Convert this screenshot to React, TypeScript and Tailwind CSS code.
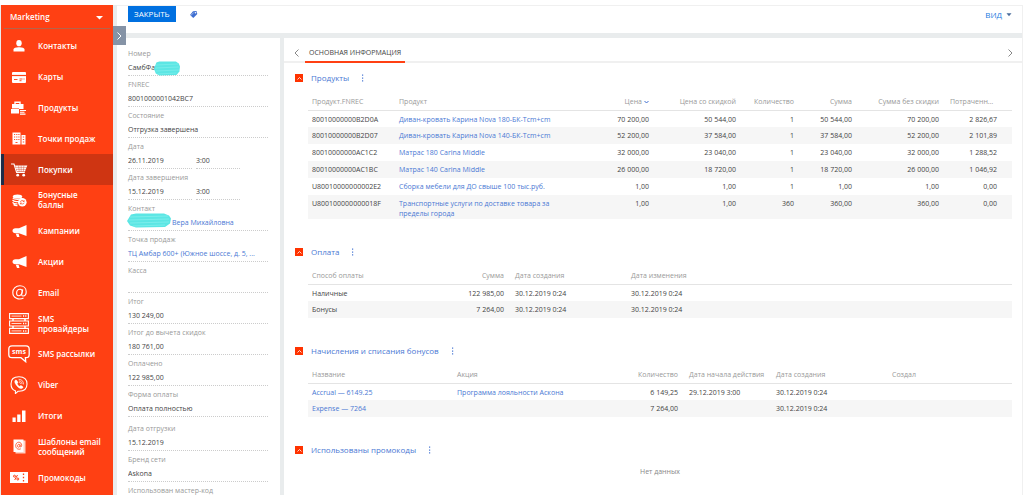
// src/App.tsx
import type { ReactNode } from "react";

const menu: { title: string; icon: ReactNode; active?: boolean }[] = [
  {
    title: "Контакты",
    icon: (
      <svg width="12" height="12" viewBox="0 0 12 12" fill="currentColor">
        <ellipse cx="6" cy="3.2" rx="2.7" ry="3.1" />
        <path d="M.5 11.500V9.400C.5 7.900 3.400 7.200 6 7.200s5.500.7 5.500 2.200v2.100z" />
      </svg>
    ),
  },
  {
    title: "Карты",
    icon: (
      <svg width="14" height="11" viewBox="0 0 14 11">
        <rect width="14" height="11" rx="1" fill="#fff" />
        <path d="M0 3.500h14" stroke="#ff4013" strokeWidth="1.200" />
        <path d="M2 7.500h3.500M7.500 7h3M7.500 8.700h2M11.500 7h1" stroke="#ff4013" strokeWidth=".9" />
      </svg>
    ),
  },
  {
    title: "Продукты",
    icon: (
      <svg width="16" height="14" viewBox="0 0 16 14">
        <path d="M4 3V1.200h5V3" fill="none" stroke="#fff" strokeWidth="1.400" />
        <path d="M1 3h11.500v5H8v4.500H0V8h1z" fill="#fff" />
        <path d="M0 7.500h8" stroke="#ff4013" strokeWidth=".6" />
        <path d="M9 9.500h6M9 11.300h4.500M9 13.100h5.500" stroke="#fff" strokeWidth="1.100" />
      </svg>
    ),
  },
  {
    title: "Точки продаж",
    icon: (
      <svg width="14" height="13" viewBox="0 0 14 13">
        <path d="M.5.5h8v12h-8zM9.500 3h4v9.500h-4z" fill="#fff" />
        <path d="M2 2.500h1.200M4.200 2.500h1.200M6.300 2.500h1.200M2 5h1.200M4.200 5h1.200M6.300 5h1.200M2 7.500h1.200M4.200 7.500h1.200M6.300 7.500h1.200M10.800 5h1.400M10.800 7.500h1.400M10.800 10h1.400M3.500 10.500h2" stroke="#ff4013" strokeWidth=".9" />
      </svg>
    ),
  },
  {
    title: "Покупки",
    active: true,
    icon: (
      <svg width="17" height="14" viewBox="0 0 17 14">
        <path d="M0 1h3l2.600 8.500h8.200" fill="none" stroke="#fff" strokeWidth="1.100" />
        <path d="M4 2.500h12.300L14 8.500H6z" fill="#fff" />
        <path d="M4.500 4.400h11.500M5 6.400h10M7.600 2.500l.6 6M10.200 2.500v6M12.900 2.500l-.6 6" stroke="#cf3512" strokeWidth=".4" />
        <circle cx="6.700" cy="12.200" r="1.400" fill="#fff" />
        <circle cx="12.700" cy="12.200" r="1.400" fill="#fff" />
      </svg>
    ),
  },
  {
    title: "Бонусные баллы",
    icon: (
      <svg width="15" height="13" viewBox="0 0 15 13">
        <ellipse cx="5.500" cy="2.500" rx="4.700" ry="2" fill="#fff" />
        <path d="M.8 3.800c1.500 2 7.800 2 9.300 0M.5 6c1.500 2 6 2 8 1M.5 8.300c1.200 1.500 3 1.800 5 1.600M1.500 10.500c1 1 2.500 1.300 4 1.200" fill="none" stroke="#fff" strokeWidth="1.300" />
        <circle cx="10.300" cy="8.300" r="4.300" fill="#fff" />
        <path d="M8.300 7.800c.6-1.400 2.600-1.600 3.600-.5M12.300 8.800c-.6 1.400-2.600 1.600-3.600.5M12.200 6.300v1.300h-1.300M8.400 10.300V9h1.300" fill="none" stroke="#ff4013" strokeWidth=".7" />
      </svg>
    ),
  },
  { title: "Кампании", icon: <Megaphone /> },
  { title: "Акции", icon: <Megaphone /> },
  {
    title: "Email",
    icon: (
      <svg width="15" height="15" viewBox="0 0 15 15" fill="none" stroke="#fff" strokeWidth="1.100">
        <path d="M11.500 13C7 15.500.8 13 .8 7.500.8 3.500 4 .8 7.800.8s6.400 2.500 6.400 6c0 2.600-1.500 4.200-3.100 4.200-1.500 0-1.600-1-1.300-2.200l1-4.500" />
        <path d="M10.200 6.500c0-1.300-.8-2.200-2.100-2.200-2 0-3.500 1.800-3.500 4 0 1.500.8 2.400 2 2.400 1.900 0 3.300-1.900 3.600-4.200z" />
      </svg>
    ),
  },
  {
    title: "SMS провайдеры",
    icon: (
      <svg width="20" height="21" viewBox="0 0 20 21" fill="none" stroke="#fff">
        <path d="M.6.6h18.800v5H.6zM.6 8h18.800v5H.6zM.6 15.400h18.800v5H.6z" strokeWidth="1.100" />
        <path d="M2.500 3.100h10M2.500 10.500h10M2.500 17.900h10" strokeWidth=".8" />
        <path d="M14 3.100h3.500M14 10.500h3.500M14 17.900h3.500" strokeWidth="1.500" strokeDasharray="1.200 1" />
        <path d="M4 5.600V8M16 5.600V8M4 13v2.400M16 13v2.400" strokeWidth="1.500" />
      </svg>
    ),
  },
  {
    title: "SMS рассылки",
    icon: (
      <svg width="22" height="18" viewBox="0 0 22 18">
        <path d="M4 .8h14c2 0 3.200 1.200 3.200 3.200v5.500c0 2-1.200 3.200-3.200 3.200h-.6l.3 4-4.700-4H4C2 12.700.8 11.500.8 9.500V4C.8 2 2 .8 4 .8z" fill="none" stroke="#fff" strokeWidth="1.300" />
        <text x="11" y="9.200" textAnchor="middle" fill="#fff" fontSize="7" fontWeight="700" fontFamily="Open Sans, sans-serif">sms</text>
      </svg>
    ),
  },
  {
    title: "Viber",
    icon: (
      <svg width="18" height="18" viewBox="0 0 18 18" fill="none" stroke="#fff" strokeLinecap="round">
        <path d="M9 .8c5.500 0 8 2.200 8 7.200s-2.500 7.300-8 7.300H8l-2.600 2.300V14.800C2.200 13.800 1 11.800 1 8 1 3 3.500.8 9 .8z" strokeWidth="1.100" />
        <path d="M5.300 4.200c-1.200 1-.8 2.600 1.200 5.200s4.200 3.700 5.400 3.200c1.300-.7 1.500-1.400.8-2l-1.500-1c-.8-.4-1.100.5-1.600.6-.9-.2-2-1.500-2.300-2.500.2-.6 1-.8.6-1.600L6.700 4.300c-.4-.5-.9-.5-1.400-.1z" fill="#fff" strokeWidth=".3" />
        <path d="M9 3.300c2.800.1 4.500 1.800 4.500 4.700M9.300 4.900c1.700.1 2.600 1.100 2.700 2.900M9.600 6.400c.6.1.9.500.9 1.100" strokeWidth=".7" />
      </svg>
    ),
  },
  {
    title: "Итоги",
    icon: (
      <svg width="14" height="12" viewBox="0 0 14 12" fill="currentColor">
        <path d="M.5 7.500h3.200V12H.5zM5.200 4.500h3.300V12H5.200zM10 .5h3.500V12H10z" />
      </svg>
    ),
  },
  {
    title: "Шаблоны email сообщений",
    icon: (
      <svg width="13" height="15" viewBox="0 0 13 15">
        <path d="M2.500 1.500h10v13h-10z" fill="#ffd0c2" />
        <path d="M.5.5h10v12.500h-10z" fill="#fff" />
        <path d="M7.800 9.800C5.500 11 2.700 9.500 2.700 6.700c0-2 1.400-3.500 3.100-3.500S8.700 4.600 8.700 6.400c0 2-2 2-1.700.5l.2-1.300M7 6.600c0 1.800-2.500 2.300-2.500.3S7 4.700 7 6.600z" fill="none" stroke="#ff4013" strokeWidth=".8" />
      </svg>
    ),
  },
  {
    title: "Промокоды",
    icon: (
      <svg width="18" height="11" viewBox="0 0 18 11">
        <path d="M0 0h18v11H0z" fill="#fff" />
        <path d="M7.500 3l-2.800 5" stroke="#ff4013" strokeWidth="1" />
        <path d="M13.500 1.500v8.500" stroke="#ff4013" strokeWidth="1.300" strokeDasharray="1.600 1.600" />
        <circle cx="4.500" cy="4.200" r="1" fill="none" stroke="#ff4013" />
        <circle cx="7.800" cy="7" r="1" fill="none" stroke="#ff4013" />
      </svg>
    ),
  },
];

const products = [
  ["80010000000B2D0A", "Диван-кровать Карина Nova 180-БК-Tcm+cm", "70 200,00", "50 544,00", "1", "50 544,00", "70 200,00", "2 826,67"],
  ["80010000000B2D07", "Диван-кровать Карина Nova 140-БК-Tcm+cm", "52 200,00", "37 584,00", "1", "37 584,00", "52 200,00", "2 101,89"],
  ["80010000000AC1C2", "Матрас 180 Carina Middle", "32 000,00", "23 040,00", "1", "23 040,00", "32 000,00", "1 288,52"],
  ["80010000000AC1BC", "Матрас 140 Carina Middle", "26 000,00", "18 720,00", "1", "18 720,00", "26 000,00", "1 046,92"],
  ["U80010000000002E2", "Сборка мебели для ДО свыше 100 тыс.руб.", "1,00", "1,00", "1", "1,00", "1,00", "0,00"],
  ["U800100000000018F", "Транспортные услуги по доставке товара за пределы города", "1,00", "1,00", "360", "360,00", "360,00", "0,00"],
];

function Megaphone() {
  return (
    <svg width="15" height="12" viewBox="0 0 15 12" fill="currentColor">
      <path d="M14.500 0v11L7 8.300H3.500C1.500 8.300.5 7.200.5 5.800S1.500 3.300 3.500 3.300H7z" />
      <path d="M3.800 8.800h2.800L7.500 12H5z" />
    </svg>
  );
}

function Scribble({ className }: { className: string }) {
  return (
    <svg className={className} viewBox="0 0 44 15" preserveAspectRatio="none" aria-hidden="true">
      <path d="M4 1.500L9 .5l28 0 5 2 2 3-1 5-5 3.500-29 .5L3 12.500 0 8z" fill="#5ce6e4" />
      <path d="M3 4l38-1M2 7l40-1M3 10l39-1M6 13l32-1" stroke="#83efec" strokeWidth=".8" />
    </svg>
  );
}

function Chevron({ right = false }: { right?: boolean }) {
  return (
    <svg width="5" height="8" viewBox="0 0 5 8" fill="none" stroke="currentColor">
      <path d={right ? "M.5.5L4 4 .5 7.500" : "M4.500.5L1 4l3.500 3.500"} />
    </svg>
  );
}

function Field({ id, label, value }: { id: string; label: string; value: string }) {
  return (
    <div className="h-[31px] shrink-0">
      <label htmlFor={id} className="block h-3 leading-3 text-[#999]">{label}</label>
      <input id={id} readOnly defaultValue={value} className="block h-4 w-full border-b border-dotted border-[#ccc] outline-none" />
    </div>
  );
}

function DateField({ id, label, date, time }: { id: string; label: string; date: string; time: string }) {
  return (
    <div className="h-[31px] shrink-0">
      <label htmlFor={id} className="block h-3 leading-3 text-[#999]">{label}</label>
      <div className="flex gap-1">
        <input id={id} readOnly defaultValue={date} className="h-4 w-16 border-b border-dotted border-[#ccc] outline-none" />
        <input aria-label={label} readOnly defaultValue={time} className="h-4 w-11 border-b border-dotted border-[#ccc] outline-none" />
      </div>
    </div>
  );
}

function Section({ title, children }: { title: string; children: ReactNode }) {
  return (
    <section className="mb-[25px]">
      <div className="flex h-4 items-center">
        <button aria-label="Свернуть" className="mr-2 flex h-2 w-2 items-center justify-center bg-[#ff3300] text-white">
          <svg width="5" height="3" viewBox="0 0 5 3" fill="none" stroke="currentColor">
            <path d="M.5 2.500l2-2 2 2" strokeWidth=".8" />
          </svg>
        </button>
        <h2 className="text-[8px] text-[#4a78d4]">{title}</h2>
        <button aria-label="Действия" className="ml-3 text-[#4a78d4]">
          <svg width="3" height="8" viewBox="0 0 3 8" fill="currentColor">
            <path d="M1 .5h1.200v1.300H1zM1 3.400h1.200v1.300H1zM1 6.300h1.200v1.300H1z" />
          </svg>
        </button>
      </div>
      <div className="mt-[9px] ml-[13px]">{children}</div>
    </section>
  );
}

const table = "w-full table-fixed text-left";
const th = "h-[15px] truncate border-b border-[#e4e4e4] pr-[7px] pl-1 align-top leading-[14px] font-normal text-[#999]";
const tr = "h-[17px] even:bg-[#f6f6f6]";
const td = "pt-1 pr-[7px] pl-1 align-top leading-[10px]";
const link = "text-[#4a78d4]";

export default function App() {
  return (
    <div className="flex h-screen flex-col bg-white pt-[5px] font-['Open_Sans',sans-serif] text-[7px] text-[#444]">
      <div className="flex min-h-0 flex-1 bg-[#e9eced]">
        <aside className="relative mr-1 ml-px flex w-28 shrink-0 flex-col bg-[#ff4013] pb-0.5 text-[8px] font-semibold text-white">
          <div className="relative mx-[3px] mb-[2px] h-6 border-b border-[#b5644b]">
            <select aria-label="Рабочее место" className="h-full w-full appearance-none bg-transparent pl-[6px] outline-none">
              <option>Marketing</option>
            </select>
            <svg className="pointer-events-none absolute top-[11px] right-[7px]" width="7" height="4" viewBox="0 0 7 4" fill="currentColor">
              <path d="M0 0h7L3.500 3.500z" />
            </svg>
          </div>
          <nav className="flex min-h-0 flex-1 flex-col">
            {menu.map((item) => (
              <a
                key={item.title}
                href="#"
                className={
                  item.active
                    ? "flex flex-1 items-center border-l-[3px] border-[#1c2c48] bg-[#cf3512] pr-2"
                    : "flex flex-1 items-center border-l-[3px] border-transparent pr-2"
                }
              >
                <span className="flex w-[30px] shrink-0 items-center justify-center">{item.icon}</span>
                <span className="ml-1 leading-[10px]">{item.title}</span>
              </a>
            ))}
          </nav>
          <button aria-label="Свернуть меню" className="absolute top-[21px] left-full z-10 flex h-[19px] w-[13px] items-center justify-center bg-[#8593a6] text-white">
            <Chevron right />
          </button>
        </aside>

        <div className="flex min-w-0 flex-1 flex-col border-t border-r border-[#f0f0f0]">
          <header className="mb-[5px] flex h-[27px] shrink-0 items-start bg-white pr-[10px] pl-[11px]">
            <button className="h-4 bg-[#0070e0] px-[6px] text-[8px] text-white">ЗАКРЫТЬ</button>
            <button aria-label="Теги" className="mt-1 ml-[13px] text-[#3f6fd1]">
              <svg width="9" height="9" viewBox="0 0 9 9" fill="currentColor">
                <path d="M4 1.300L7.500 1l.8 3-4 4L1 5z" />
                <path d="M4.800 2.500L1.500 5.800" stroke="#fff" strokeWidth=".5" />
                <circle cx="6.500" cy="2.700" r=".8" fill="#fff" />
              </svg>
            </button>
            <button className="ml-auto flex h-[18px] items-center gap-1 text-[8px] text-[#1a7be0]">
              ВИД
              <svg width="6" height="4" viewBox="0 0 6 4" fill="#4a6c9c">
                <path d="M.5.300h5L3 3.200z" />
              </svg>
            </button>
          </header>

          <div className="flex min-h-0 flex-1 gap-1">
            <form className="flex w-[163px] shrink-0 flex-col overflow-hidden bg-white pt-[10px] pr-3 pl-[11px]">
              <div className="relative">
                <Field id="number" label="Номер" value="СамбФа" />
                <Scribble className="absolute top-[13px] left-[26px] h-[15px] w-[26px]" />
              </div>
              <Field id="fnrec" label="FNREC" value="8001000001042BC7" />
              <Field id="state" label="Состояние" value="Отгрузка завершена" />
              <DateField id="date" label="Дата" date="26.11.2019" time="3:00" />
              <DateField id="date-end" label="Дата завершения" date="15.12.2019" time="3:00" />
              <div className="relative h-[31px] shrink-0">
                <p className="h-3 leading-3 text-[#999]">Контакт</p>
                <a href="#" className="block h-4 border-b border-dotted border-[#ccc] pl-11 leading-4 text-[#4a78d4]">Вера Михайловна</a>
                <Scribble className="absolute top-[10px] -left-px h-[15px] w-11" />
              </div>
              <div className="h-[31px] shrink-0">
                <p className="h-3 leading-3 text-[#999]">Точка продаж</p>
                <a href="#" className="block h-4 border-b border-dotted border-[#ccc] leading-4 text-[#4a78d4]">ТЦ Амбар 600+ (Южное шоссе, д. 5, ...</a>
              </div>
              <Field id="cashbox" label="Касса" value="" />
              <Field id="total" label="Итог" value="130 249,00" />
              <Field id="total-full" label="Итог до вычета скидок" value="180 761,00" />
              <Field id="paid" label="Оплачено" value="122 985,00" />
              <Field id="pay-form" label="Форма оплаты" value="Оплата полностью" />
              <div className="mt-[3px]">
                <Field id="ship-date" label="Дата отгрузки" value="15.12.2019" />
              </div>
              <Field id="brand" label="Бренд сети" value="Askona" />
              <Field id="master-code" label="Использован мастер-код" value="" />
            </form>

            <main className="min-w-0 flex-1 overflow-hidden bg-white">
              <div className="flex h-[25px] items-stretch border-b-2 border-[#f0f0f0] pr-[9px] pl-[10px] text-[#888]">
                <button aria-label="Назад" className="pt-[7px]"><Chevron /></button>
                <button className="-mb-0.5 ml-[6px] border-b-2 border-[#ff4013] px-1 pt-2 text-[#444]">ОСНОВНАЯ ИНФОРМАЦИЯ</button>
                <button aria-label="Вперёд" className="ml-auto pt-[7px]"><Chevron right /></button>
              </div>

              <div className="pt-[7px] pr-[10px] pl-[11px]">
                <Section title="Продукты">
                  <table className={table}>
                    <colgroup>
                      <col className="w-[87px]" />
                      <col />
                      <col className="w-[87px]" />
                      <col className="w-[87px]" />
                      <col className="w-[58px]" />
                      <col className="w-[58px]" />
                      <col className="w-[87px]" />
                      <col className="w-[58px]" />
                      <col className="w-2" />
                    </colgroup>
                    <thead>
                      <tr>
                        <th className={th}>Продукт.FNREC</th>
                        <th className={th}>Продукт</th>
                        <th className={`${th} text-right`}>
                          Цена
                          <svg className="ml-0.5 inline" width="5" height="4" viewBox="0 0 5 4" fill="none" stroke="#3f6fd1">
                            <path d="M.5 1l2 2 2-2" />
                          </svg>
                        </th>
                        <th className={`${th} text-right`}>Цена со скидкой</th>
                        <th className={`${th} text-right`}>Количество</th>
                        <th className={`${th} text-right`}>Сумма</th>
                        <th className={`${th} text-right`}>Сумма без скидки</th>
                        <th className={th}>Потраченны...</th>
                        <th className={th}></th>
                      </tr>
                    </thead>
                    <tbody>
                      {products.map(([fnrec, name, ...numbers]) => (
                        <tr key={fnrec} className={tr}>
                          <td className={td}>{fnrec}</td>
                          <td className={td}>
                            <a href="#" className="block max-w-[166px] text-[#4a78d4]">{name}</a>
                          </td>
                          {numbers.map((n, i) => (
                            <td key={i} className={`${td} text-right`}>{n}</td>
                          ))}
                          <td></td>
                        </tr>
                      ))}
                    </tbody>
                  </table>
                </Section>

                <Section title="Оплата">
                  <table className={table}>
                    <colgroup>
                      <col className="w-[116px]" />
                      <col className="w-[87px]" />
                      <col className="w-[116px]" />
                      <col />
                    </colgroup>
                    <thead>
                      <tr>
                        <th className={th}>Способ оплаты</th>
                        <th className={`${th} text-right`}>Сумма</th>
                        <th className={th}>Дата создания</th>
                        <th className={th}>Дата изменения</th>
                      </tr>
                    </thead>
                    <tbody>
                      <tr className={tr}>
                        <td className={td}>Наличные</td>
                        <td className={`${td} text-right`}>122 985,00</td>
                        <td className={td}>30.12.2019 0:24</td>
                        <td className={td}>30.12.2019 0:24</td>
                      </tr>
                      <tr className={tr}>
                        <td className={td}>Бонусы</td>
                        <td className={`${td} text-right`}>7 264,00</td>
                        <td className={td}>30.12.2019 0:24</td>
                        <td className={td}>30.12.2019 0:24</td>
                      </tr>
                    </tbody>
                  </table>
                </Section>

                <Section title="Начисления и списания бонусов">
                  <table className={table}>
                    <colgroup>
                      <col className="w-[145px]" />
                      <col className="w-[145px]" />
                      <col className="w-[87px]" />
                      <col className="w-[87px]" />
                      <col className="w-[116px]" />
                      <col />
                    </colgroup>
                    <thead>
                      <tr>
                        <th className={th}>Название</th>
                        <th className={th}>Акция</th>
                        <th className={`${th} text-right`}>Количество</th>
                        <th className={th}>Дата начала действия</th>
                        <th className={th}>Дата создания</th>
                        <th className={th}>Создал</th>
                      </tr>
                    </thead>
                    <tbody>
                      <tr className={tr}>
                        <td className={td}><a href="#" className={link}>Accrual — 6149.25</a></td>
                        <td className={td}><a href="#" className={link}>Программа лояльности Аскона</a></td>
                        <td className={`${td} text-right`}>6 149,25</td>
                        <td className={td}>29.12.2019 3:00</td>
                        <td className={td}>30.12.2019 0:24</td>
                        <td className={td}></td>
                      </tr>
                      <tr className={tr}>
                        <td className={td}><a href="#" className={link}>Expense — 7264</a></td>
                        <td className={td}></td>
                        <td className={`${td} text-right`}>7 264,00</td>
                        <td className={td}></td>
                        <td className={td}>30.12.2019 0:24</td>
                        <td className={td}></td>
                      </tr>
                    </tbody>
                  </table>
                </Section>

                <Section title="Использованы промокоды">
                  <p className="text-center text-[#888]">Нет данных</p>
                </Section>
              </div>
            </main>
          </div>
        </div>
      </div>
    </div>
  );
}
